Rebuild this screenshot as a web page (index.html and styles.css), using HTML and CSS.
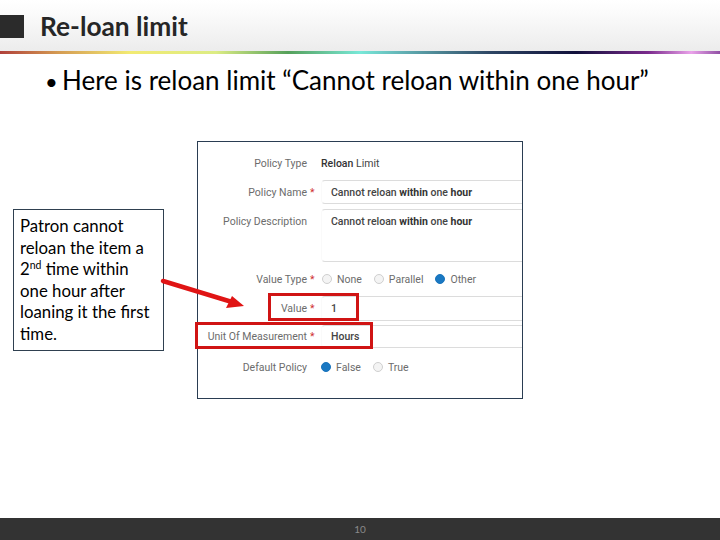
FILE: index.html
```html
<!DOCTYPE html>
<html>
<head>
<meta charset="utf-8">
<link rel="stylesheet" href="styles.css">
</head>
<body>
<div class="slide">
  <header class="head">
    <div class="head-mark"></div>
    <h1 class="head-title">Re-loan limit</h1>
  </header>
  <div class="rainbow"></div>
  <p class="bullet"><span class="dot">•</span>Here is reloan limit “Cannot reloan within one hour”</p>

  <div class="main">
    <div class="callout">
      <span class="cl">Patron cannot</span>
      <span class="cl">reloan the item a</span>
      <span class="cl">2<sup>nd</sup> time within</span>
      <span class="cl">one hour after</span>
      <span class="cl">loaning it the first</span>
      <span class="cl">time.</span>
    </div>

    <div class="panel">
      <div class="row r1">
        <div class="lbl">Policy Type</div><div class="star"></div>
        <div class="val plain"><b>Reloan</b> Limit</div>
      </div>
      <div class="row r2">
        <div class="lbl">Policy Name</div><div class="star">*</div>
        <div class="val"><div class="input"><span>Cannot reloan <b>within</b> one <b>hour</b></span></div></div>
      </div>
      <div class="row r3">
        <div class="lbl">Policy Description</div><div class="star"></div>
        <div class="val"><div class="input area"><span>Cannot reloan <b>within</b> one <b>hour</b></span></div></div>
      </div>
      <div class="row r4">
        <div class="lbl">Value Type</div><div class="star">*</div>
        <div class="val radios">
          <span class="radio"></span><span class="opt">None</span>
          <span class="radio"></span><span class="opt">Parallel</span>
          <span class="radio on"></span><span class="opt">Other</span>
        </div>
      </div>
      <div class="row r5">
        <div class="lbl">Value</div><div class="star">*</div>
        <div class="val"><div class="input"><span>1</span></div></div>
      </div>
      <div class="row r6">
        <div class="lbl">Unit Of Measurement</div><div class="star">*</div>
        <div class="val"><div class="input"><span>Hours</span></div></div>
      </div>
      <div class="row r7">
        <div class="lbl">Default Policy</div><div class="star"></div>
        <div class="val radios dp">
          <span class="radio on"></span><span class="opt">False</span>
          <span class="radio"></span><span class="opt">True</span>
        </div>
      </div>
    </div>
  </div>

  <footer class="foot">10</footer>

  <div class="mark mark-value"></div>
  <div class="mark mark-unit"></div>
  <svg class="arrow" width="100" height="40" viewBox="0 0 100 40">
    <line x1="3" y1="6" x2="72" y2="27" stroke="#e01414" stroke-width="4.5" stroke-linecap="round"/>
    <polygon points="84,31 66,33 72,21" fill="#e01414"/>
  </svg>
</div>
</body>
</html>
```

FILE: styles.css
```css
html, body {
  margin: 0;
  padding: 0;
  background: #ffffff;
}
.slide {
  position: relative;
  width: 720px;
  height: 540px;
  display: flex;
  flex-direction: column;
  overflow: hidden;
  font-family: Lato, "Liberation Sans", sans-serif;
}
.head {
  height: 51px;
  display: flex;
  align-items: center;
  background: linear-gradient(to bottom, #ffffff 0%, #fbfbfb 25%, #ececec 100%);
}
.head-mark {
  width: 24px;
  height: 23px;
  background: #2b2b2b;
  margin-top: 1px;
}
.head-title {
  margin: 0 0 0 16px;
  font-size: 26.3px;
  font-weight: bold;
  color: #262626;
}
.rainbow {
  height: 3px;
  background: linear-gradient(to right, #b0403a 0%, #d49a52 8%, #f2ea72 18%, #dcec84 30%, #55a05a 40%, #78e8d8 50%, #62b0b4 56%, #2e4664 68%, #10103a 80%, #7a2a8c 90%, #eaa2ea 96%, #9050a4 100%);
}
.bullet {
  margin: 11px 0 0 44px;
  height: 30px;
  font-size: 26px;
  line-height: 30px;
  color: #000;
  white-space: nowrap;
}
.dot {
  display: inline-block;
  width: 17px;
  font-size: 22px;
  line-height: 22px;
  margin-left: 1px;
}
.main {
  display: flex;
  align-items: flex-start;
  margin-top: 46px;
  padding-left: 13px;
}
.callout {
  margin-top: 68px;
  border: 1px solid #2f4050;
  padding: 5px 0 0 6px;
  box-sizing: border-box;
  width: 151px;
  height: 142px;
  display: flex;
  flex-direction: column;
  font-size: 16.8px;
  line-height: 21.6px;
  color: #000;
}
.cl { display: block; white-space: nowrap; }
.cl sup { font-size: 10.5px; line-height: 0; vertical-align: 6px; }
.panel {
  margin-left: 33px;
  width: 326px;
  height: 258px;
  box-sizing: border-box;
  border: 1px solid #2a3d52;
  overflow: hidden;
  font-family: Roboto, "Liberation Sans", sans-serif;
  font-size: 10.5px;
  color: #6c6c6c;
}
.row {
  display: flex;
  align-items: center;
}
.lbl {
  width: 109px;
  flex: none;
  text-align: right;
}
.star {
  width: 14px;
  flex: none;
  color: #d03030;
  padding-left: 3px;
  box-sizing: border-box;
}
.val {
  flex: none;
  width: 220px;
}
.plain { color: #444; }
.plain b { font-weight: 500; color: #333; }
.input {
  box-sizing: border-box;
  height: 100%;
  border: 1px solid #dcdcdc;
  border-left-color: #fafafa;
  border-radius: 4px 0 0 4px;
  padding: 0 0 0 9px;
  display: flex;
  align-items: center;
  color: #444;
  font-weight: 500;
}
.input b { font-weight: 700; color: #333; }
.r1 { margin-top: 9px; height: 24px; }
.r2 { margin-top: 5px; height: 24px; }
.r2 .val, .r3 .val, .r5 .val, .r6 .val { height: 100%; }
.r3 { margin-top: 5px; height: 53px; align-items: flex-start; }
.r3 .lbl { padding-top: 6px; line-height: 14px; }
.area { align-items: flex-start; padding-top: 5px; line-height: 14px; }
.r4 { margin-top: 4px; height: 26px; }
.r5 { margin-top: 4px; height: 25px; }
.r6 { margin-top: 4px; height: 23px; }
.r7 { margin-top: 7px; height: 24px; }
.radios {
  display: flex;
  align-items: center;
  padding-left: 1px;
}
.dp { padding-left: 0; }
.radio {
  width: 10px;
  height: 10px;
  border-radius: 50%;
  box-sizing: border-box;
  border: 1px solid #cfcfcf;
  background: #f4f4f4;
  flex: none;
}
.radio.on {
  border-color: #1874bd;
  background: #1a78c2;
}
.opt {
  margin-left: 5px;
  margin-right: 12px;
  color: #6c6c6c;
}
.foot {
  margin-top: auto;
  height: 22px;
  background: #333333;
  color: #8a8a8a;
  font-size: 10px;
  line-height: 22px;
  text-align: center;
}
.mark {
  position: absolute;
  border: 3px solid #d01414;
  box-sizing: border-box;
}
.mark-value { left: 268px; top: 293px; width: 91px; height: 28px; }
.mark-unit { left: 195px; top: 322px; width: 178px; height: 27px; }
.arrow {
  position: absolute;
  left: 160px;
  top: 275px;
}
```
